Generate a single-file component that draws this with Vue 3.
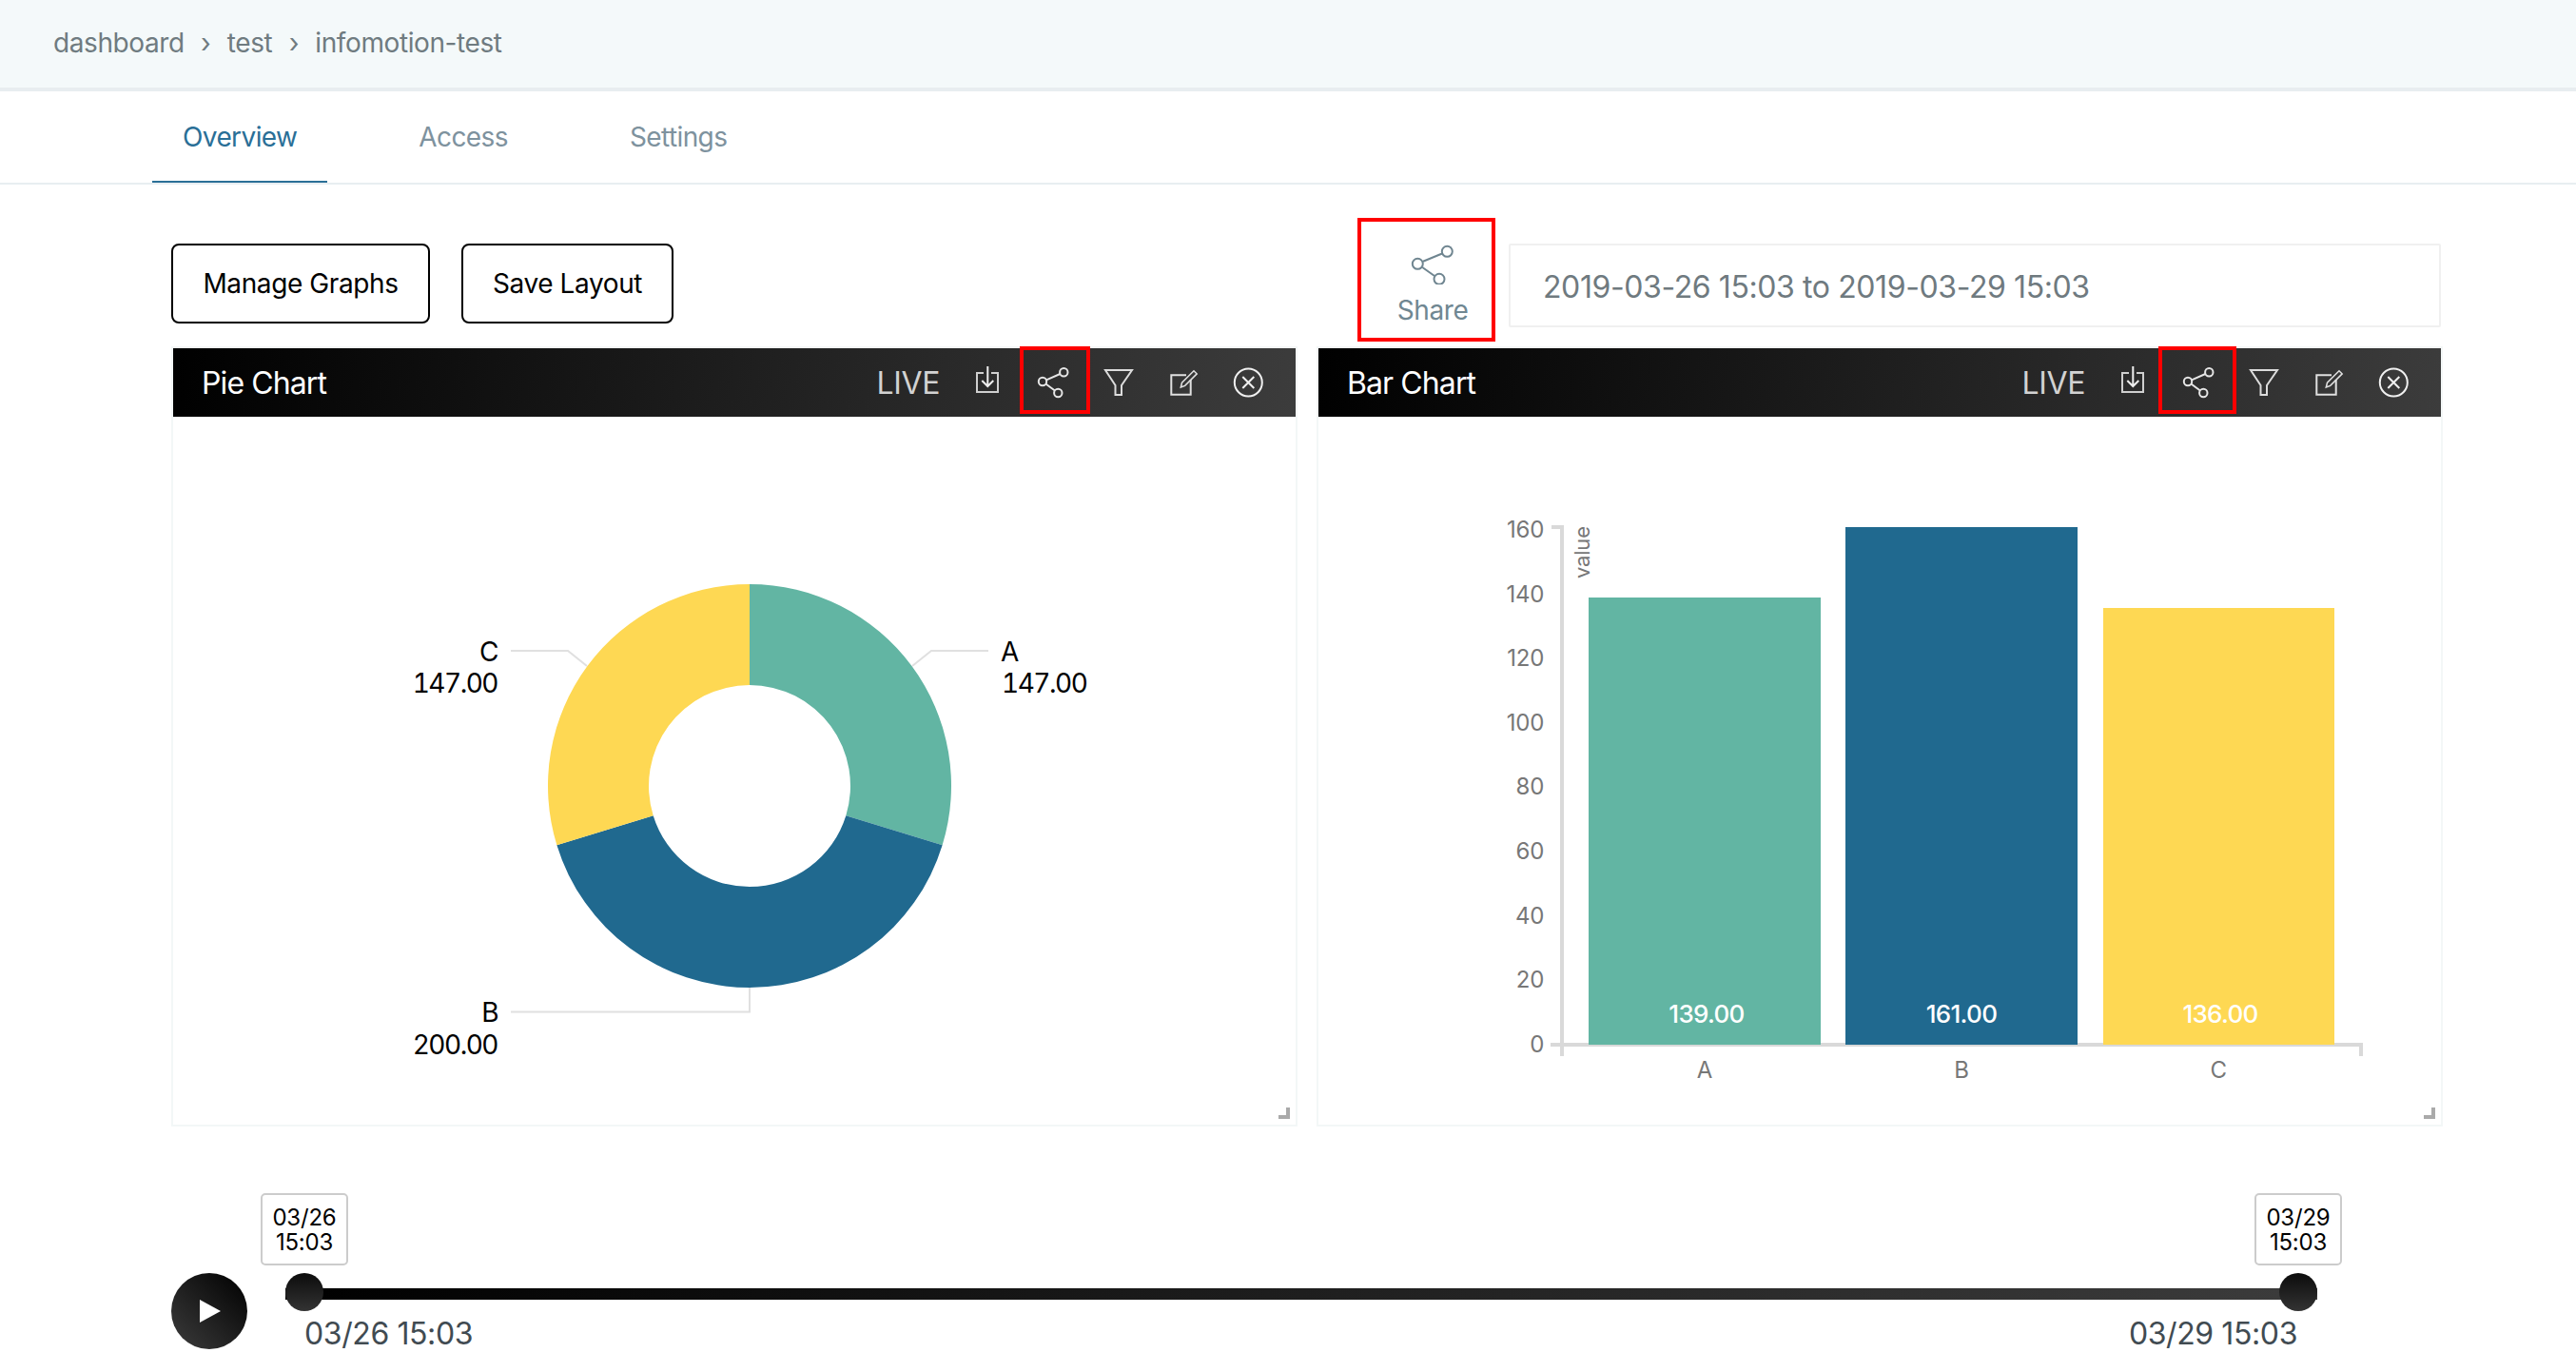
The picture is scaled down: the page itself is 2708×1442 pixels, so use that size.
<script setup>
const panels = [
  { id: 'pie', title: 'Pie Chart', redClass: 'red-left' },
  { id: 'bar', title: 'Bar Chart', redClass: 'red-right' }
]

const CX = 788
const CY = 826
const RO = 212
const RI = 106
function pt(r, deg) {
  const a = (deg * Math.PI) / 180
  return `${(CX + r * Math.sin(a)).toFixed(2)} ${(CY - r * Math.cos(a)).toFixed(2)}`
}
function arc(a0, a1) {
  const large = a1 - a0 > 180 ? 1 : 0
  return `M${pt(RO, a0)} A${RO} ${RO} 0 ${large} 1 ${pt(RO, a1)} L${pt(RI, a1)} A${RI} ${RI} 0 ${large} 0 ${pt(RI, a0)} Z`
}
const slices = [
  { d: arc(0, 107.1), fill: '#62b5a3' },
  { d: arc(107.1, 252.9), fill: '#20698f' },
  { d: arc(252.9, 360), fill: '#fed853' }
]
const ticks = [160, 140, 120, 100, 80, 60, 40, 20, 0].map((v, i) => ({ v, y: 555 + i * 67.6 }))
const bars = [
  { x: 1670, w: 244, top: 628, fill: '#62b5a3', val: '139.00', cat: 'A', cx: 1792, vx: 1794 },
  { x: 1940, w: 244, top: 554, fill: '#20698f', val: '161.00', cat: 'B', cx: 2062, vx: 2062 },
  { x: 2211, w: 243, top: 639, fill: '#fed853', val: '136.00', cat: 'C', cx: 2332, vx: 2334 }
]
</script>

<template>
  <div class="page">
    <header class="crumbs">
      <span>dashboard</span><i>›</i><span>test</span><i>›</i><span>infomotion-test</span>
    </header>

    <nav class="tabs">
      <a class="tab active">Overview</a>
      <a class="tab">Access</a>
      <a class="tab">Settings</a>
    </nav>

    <main class="content">
      <section class="toolbar">
        <div class="actions">
          <button class="btn manage">Manage Graphs</button>
          <button class="btn save">Save Layout</button>
        </div>
        <div class="range">
          <div class="share">
            <svg class="share-icon" width="50" height="44" viewBox="0 0 50 44" fill="none" stroke="#6f8590" stroke-width="2">
              <circle cx="40.3" cy="9.3" r="5.5" />
              <circle cx="9.3" cy="22.3" r="5.5" />
              <circle cx="32" cy="38.3" r="5.5" />
              <path d="M15 19.7 35 11.5M14.3 26 27 35" />
            </svg>
            <span>Share</span>
          </div>
          <div class="date">2019-03-26 15:03 to 2019-03-29 15:03</div>
        </div>
      </section>

      <section class="panels">
        <article v-for="p in panels" :key="p.id" class="panel">
          <div class="head">
            <h2 class="title">{{ p.title }}</h2>
            <span class="live">LIVE</span>
            <div class="icons">
              <svg width="40" height="48" viewBox="0 0 40 48" fill="none" stroke="#cfcfcf" stroke-width="2">
                <path d="M18 14H11V34H33V14H26" />
                <path d="M22.3 7V27.5M16.3 22 22.3 28 28.3 22" stroke="#eee" />
              </svg>
              <div class="share-cell" :class="p.redClass">
                <svg width="40" height="48" viewBox="0 0 40 48" fill="none" stroke="#e6e6e6" stroke-width="2">
                  <circle cx="33.3" cy="13.3" r="4.2" />
                  <circle cx="11" cy="23" r="4.2" />
                  <circle cx="27.3" cy="35" r="4.2" />
                  <path d="M15 21.3 29.4 15M14.4 25.5 23.9 32.5" />
                </svg>
              </div>
              <svg width="40" height="48" viewBox="0 0 40 48" fill="none" stroke="#dcdcdc" stroke-width="2">
                <path d="M8 11H36L25 27V37H18.5V27Z" />
              </svg>
              <svg width="40" height="48" viewBox="0 0 40 48" fill="none" stroke="#e0e0e0" stroke-width="2">
                <path d="M24 16.3H8.3V36.7H28.7V21" />
                <path d="M18.3 29 19.5 24.2 32 11.7 35.2 14.9 22.7 27.4Z" stroke-width="1.5" />
              </svg>
              <svg width="40" height="48" viewBox="0 0 40 48" fill="none" stroke="#f0f0f0" stroke-width="2">
                <circle cx="20.3" cy="24" r="14.5" />
                <path d="M14.3 18 26.3 30M26.3 18 14.3 30" />
              </svg>
            </div>
          </div>

          <div class="body">
            <svg v-if="p.id === 'pie'" class="chart" width="1180" height="744" viewBox="182 438 1180 744">
              <path v-for="(s, i) in slices" :key="i" :d="s.d" :fill="s.fill" />
              <g fill="none" stroke="#e0e0e0" stroke-width="2">
                <path d="M959 700 979 684H1039" />
                <path d="M617 700 597 684H537" />
                <path d="M788 1038V1063.5H537" />
              </g>
              <g class="pie-label">
                <text x="1052" y="695">A</text>
                <text x="1053" y="728">147.00</text>
                <text x="523" y="695" text-anchor="end">C</text>
                <text x="523" y="728" text-anchor="end">147.00</text>
                <text x="523" y="1074" text-anchor="end">B</text>
                <text x="523" y="1108" text-anchor="end">200.00</text>
              </g>
            </svg>

            <svg v-else class="chart" width="1180" height="744" viewBox="1386 438 1180 744">
              <g class="axis-label">
                <text v-for="t in ticks" :key="t.v" x="1623" :y="t.y + 10" text-anchor="end">{{ t.v }}</text>
                <text class="axis-name" transform="translate(1671 608) rotate(-90)">value</text>
                <text v-for="b in bars" :key="b.cat" :x="b.cx" y="1133" text-anchor="middle">{{ b.cat }}</text>
              </g>
              <path d="M1631 554H1642V1110M1630 1098H2482V1110" fill="none" stroke="#d9d9d9" stroke-width="4" />
              <g v-for="b in bars" :key="b.val">
                <rect :x="b.x" :y="b.top" :width="b.w" :height="1098 - b.top" :fill="b.fill" />
                <text class="bar-value" :x="b.vx" y="1075" text-anchor="middle">{{ b.val }}</text>
              </g>
            </svg>

            <span class="resize"></span>
          </div>
        </article>
      </section>

      <section class="player">
        <button class="play" aria-label="Play"><span class="tri"></span></button>
        <div class="slider">
          <div class="rail">
            <div class="track"></div>
            <span class="knob knob-l"></span>
            <span class="knob knob-r"></span>
            <div class="tip tip-l">03/26<br />15:03</div>
            <div class="tip tip-r">03/29<br />15:03</div>
          </div>
          <div class="ends">
            <span>03/26 15:03</span>
            <span>03/29 15:03</span>
          </div>
        </div>
      </section>
    </main>
  </div>
</template>

<style scoped>
.page {
  width: 2708px;
  height: 1442px;
  overflow: hidden;
  background: #fff;
  font-family: Inter, "Noto Sans", sans-serif;
}
.crumbs {
  box-sizing: border-box;
  height: 96px;
  padding: 0 0 2px 56px;
  display: flex;
  align-items: center;
  background: #f4f9fa;
  border-bottom: 4px solid #e8edf0;
  color: #6f7b80;
  font-size: 28px;
  letter-spacing: -0.4px;
}
.crumbs i {
  font-style: normal;
  width: 45px;
  text-align: center;
}
.tabs {
  box-sizing: border-box;
  height: 98px;
  padding-left: 160px;
  display: flex;
  gap: 64px;
  border-bottom: 2px solid #e8eef1;
}
.tab {
  padding: 0 32px;
  height: 96px;
  box-sizing: border-box;
  line-height: 96px;
  font-size: 28px;
  letter-spacing: -0.6px;
  color: #7e929e;
}
.tab.active {
  color: #2a6f97;
  border-bottom: 2px solid #2a6f97;
}
.content {
  padding: 0 140px 0 180px;
}
.toolbar {
  box-sizing: border-box;
  height: 170px;
  padding-top: 35px;
  display: flex;
  align-items: flex-start;
  justify-content: space-between;
}
.actions {
  margin-top: 27px;
  display: flex;
  gap: 33px;
}
.btn {
  box-sizing: border-box;
  height: 84px;
  background: #fff;
  border: 2px solid #000;
  border-radius: 8px;
  font: 28px Inter, "Noto Sans", sans-serif;
  letter-spacing: -0.4px;
  color: #000;
  padding: 0;
}
.manage { width: 272px; }
.save { width: 223px; }
.range {
  display: flex;
  align-items: flex-start;
  gap: 14px;
  margin-right: 2px;
}
.share {
  box-sizing: border-box;
  width: 145px;
  height: 130px;
  padding: 22px 0 0 13px;
  border: 4px solid #f00;
  display: flex;
  flex-direction: column;
  align-items: center;
  color: #708792;
  font-size: 28px;
  letter-spacing: -0.4px;
}
.share-icon {
  display: block;
}
.share span {
  margin-top: 10px;
  line-height: 34px;
}
.date {
  box-sizing: border-box;
  width: 980px;
  height: 88px;
  margin-top: 27px;
  padding-left: 34px;
  border: 2px solid #f0f0f0;
  border-radius: 2px;
  line-height: 87px;
  font-size: 32px;
  letter-spacing: -0.4px;
  color: #6f7a7f;
}
.panels {
  display: flex;
  gap: 20px;
}
.panel {
  box-sizing: border-box;
  width: 1184px;
  height: 820px;
  border: 2px solid #f3f7f7;
  display: flex;
  flex-direction: column;
}
.head {
  height: 72px;
  flex: none;
  box-sizing: border-box;
  padding: 0 30px;
  display: flex;
  align-items: center;
  background: linear-gradient(100deg, #000 0%, #3c3c3c 100%);
}
.title {
  margin: 0;
  font-size: 32px;
  font-weight: 400;
  letter-spacing: -0.9px;
  color: #fff;
}
.live {
  margin-left: auto;
  margin-right: 28px;
  font-size: 32px;
  letter-spacing: -0.4px;
  color: #d2d2d2;
}
.icons {
  display: flex;
  gap: 29px;
}
.icons svg {
  display: block;
}
.share-cell {
  position: relative;
}
.share-cell::after {
  content: "";
  position: absolute;
  top: -14px;
  height: 71px;
  border: 4px solid #f00;
  box-sizing: border-box;
}
.red-left::after {
  left: -13px;
  width: 74px;
}
.red-right::after {
  left: -20px;
  width: 82px;
}
.body {
  position: relative;
  flex: 1;
}
.chart {
  display: block;
}
.pie-label text {
  font-size: 28px;
  font-variant-numeric: tabular-nums;
  letter-spacing: -1.5px;
  fill: #000;
}
.axis-label text {
  font-size: 24px;
  letter-spacing: -0.3px;
  fill: #777;
}
.axis-label .axis-name {
  font-size: 22px;
  letter-spacing: -0.2px;
}
.bar-value {
  font-size: 26px;
  font-weight: 500;
  letter-spacing: -0.7px;
  fill: #fff;
}
.resize {
  position: absolute;
  right: 6px;
  bottom: 6px;
  width: 12px;
  height: 12px;
  box-sizing: border-box;
  border-right: 4px solid #aaa;
  border-bottom: 4px solid #aaa;
}
.player {
  margin-top: 154px;
  display: flex;
  align-items: flex-start;
  gap: 40px;
}
.play {
  width: 80px;
  height: 80px;
  flex: none;
  padding: 0;
  border: 0;
  border-radius: 50%;
  background: linear-gradient(45deg, #3c3c3c, #000);
  display: flex;
  align-items: center;
  justify-content: center;
}
.tri {
  width: 0;
  height: 0;
  margin-left: 2px;
  border-left: 22px solid #fff;
  border-top: 12px solid transparent;
  border-bottom: 12px solid transparent;
}
.slider {
  width: 2136px;
}
.rail {
  position: relative;
  height: 40px;
}
.track {
  position: absolute;
  left: 0;
  right: 0;
  top: 16px;
  height: 12px;
  background: linear-gradient(90deg, #000, #3c3c3c);
}
.knob {
  position: absolute;
  top: 0;
  width: 40px;
  height: 40px;
  border-radius: 50%;
  background: linear-gradient(180deg, #0c0c0c, #333);
}
.knob-l { left: 0; }
.knob-r { right: 0; }
.tip {
  position: absolute;
  top: -84px;
  box-sizing: border-box;
  width: 92px;
  height: 76px;
  padding-top: 11px;
  background: #fff;
  border: 2px solid #ccc;
  border-radius: 5px;
  text-align: center;
  font-size: 24px;
  line-height: 26px;
  letter-spacing: -0.2px;
  color: #000;
}
.tip-l { left: -26px; }
.tip-r { right: -26px; }
.ends {
  display: flex;
  justify-content: space-between;
  padding: 4px 21px 0 20px;
  font-size: 32px;
  line-height: 40px;
  letter-spacing: -0.4px;
  color: #414b52;
}
</style>

<style>
html,
body {
  margin: 0;
  background: #fff;
}
</style>
